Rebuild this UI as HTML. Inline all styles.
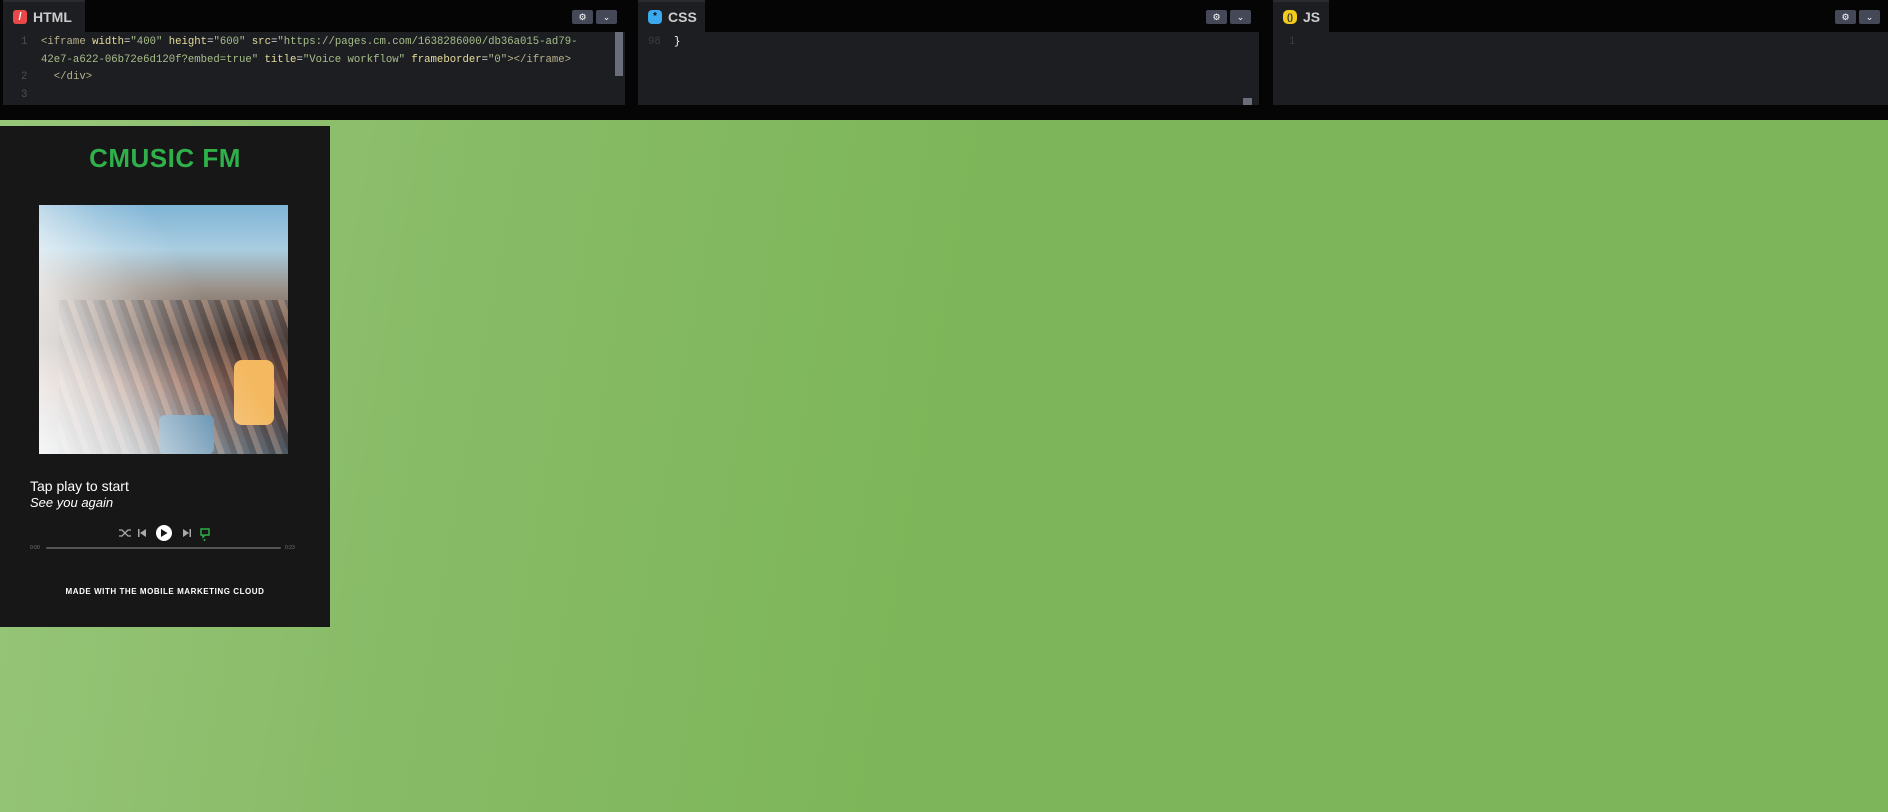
<!DOCTYPE html>
<html><head><meta charset="utf-8"><style>
*{margin:0;padding:0;box-sizing:border-box}
body{width:1888px;height:812px;overflow:hidden;background:linear-gradient(100deg,#98c67b 0%,#88bb66 25%,#7db65a 50%,#7db65a 100%);font-family:"Liberation Sans",sans-serif;position:relative}
.top{position:absolute;left:0;top:0;width:1888px;height:120px;background:#050505}
.panel{position:absolute;top:0;height:105px;background:#1d1e22}
.tabbar{position:absolute;left:0;top:0;right:0;height:32px;background:#050505}
.tab{position:absolute;left:0;top:0;height:32px;background:#1d1e22;border-top:2px solid #2a2b30;color:#ccc;font-size:14px;font-weight:bold;display:flex;align-items:center;padding-left:10px}
.ico{width:14px;height:14px;border-radius:3px;margin-right:6px;display:inline-block}
.btns{position:absolute;top:10px;right:8px;display:flex;gap:3px}
.btns span{width:21px;height:14px;background:#444857;border-radius:2px;color:#fff;font-size:9px;text-align:center;line-height:14px}
.code{position:absolute;left:0;top:32px;font-family:"Liberation Mono",monospace;font-size:10.65px;line-height:17.6px;padding-top:2px}
.ln{position:absolute;left:18px;color:#4c4e56;width:14px}
.cl{position:absolute;left:38px;white-space:pre}
.t{color:#b7b38d}.a{color:#e8dd9c}.v{color:#a8bf8a}.p{color:#ddd}
.player{position:absolute;left:0;top:126px;width:330px;height:501px;background:#171717}
</style></head><body>
<div class="top"></div>
<div class="panel" style="left:3px;width:622px">
 <div class="tabbar"></div>
 <div class="tab" style="width:82px"><span class="ico" style="background:#e84848;color:#fff;font-size:11px;text-align:center;line-height:14px">/</span>HTML</div>
 <div class="btns"><span>⚙</span><span>⌄</span></div>
 <div class="code" style="width:100%;height:73px">
  <div class="ln" style="top:2px">1</div>
  <div class="cl" style="top:2px"><span class="t">&lt;iframe</span> <span class="a">width</span><span class="p">=</span><span class="v">"400"</span> <span class="a">height</span><span class="p">=</span><span class="v">"600"</span> <span class="a">src</span><span class="p">=</span><span class="v">"https://pages.cm.com/1638286000/db36a015-ad79-</span></div>
  <div class="cl" style="top:19.6px"><span class="v">42e7-a622-06b72e6d120f?embed=true"</span> <span class="a">title</span><span class="p">=</span><span class="v">"Voice workflow"</span> <span class="a">frameborder</span><span class="p">=</span><span class="v">"0"</span><span class="t">&gt;&lt;/iframe&gt;</span></div>
  <div class="ln" style="top:37.2px">2</div>
  <div class="cl" style="top:37.2px">  <span class="t">&lt;/div&gt;</span></div>
  <div class="ln" style="top:54.8px">3</div>
 </div>
 <div style="position:absolute;right:2px;top:32px;width:8px;height:44px;background:#6a6d7a"></div>
</div>
<div class="panel" style="left:638px;width:621px">
 <div class="tabbar"></div>
 <div class="tab" style="width:67px"><span class="ico" style="background:#3aa9ee;border-radius:4px;color:#111;font-size:10px;text-align:center;line-height:14px">*</span>CSS</div>
 <div class="btns"><span>⚙</span><span>⌄</span></div>
 <div class="code" style="width:100%"><div class="ln" style="top:2px;left:10px;color:#3a3c44">98</div><div class="cl" style="top:2px;left:36px;color:#fff">}</div></div>
 <div style="position:absolute;right:7px;bottom:0;width:9px;height:7px;background:#6a6d7a"></div>
</div>
<div class="panel" style="left:1273px;width:615px">
 <div class="tabbar"></div>
 <div class="tab" style="width:56px"><span class="ico" style="background:#f2cb1d;border-radius:5px;color:#333;font-size:9px;text-align:center;line-height:14px">()</span>JS</div>
 <div class="btns"><span>⚙</span><span>⌄</span></div>
 <div class="code"><div class="ln" style="top:2px;left:16px;color:#3a3c44">1</div></div>
</div>

<div class="player">
 <div style="position:absolute;left:0;width:330px;top:17px;text-align:center;color:#2fb04a;font-size:26px;font-weight:bold;letter-spacing:0.5px;font-family:'Liberation Sans',sans-serif">CMUSIC FM</div>
 <div style="position:absolute;left:39px;top:79px;width:249px;height:249px;overflow:hidden;background:linear-gradient(180deg,#7fb4d6 0%,#a9cde0 18%,#9a8f86 34%,#5b4a42 55%,#8a5a48 72%,#4d5f6c 100%)">
  <div style="position:absolute;left:20px;top:95px;width:229px;height:154px;background:repeating-linear-gradient(70deg,rgba(40,30,30,.4) 0 6px,rgba(200,150,120,.3) 6px 12px,rgba(60,60,70,.3) 12px 18px)"></div>
  <div style="position:absolute;left:195px;top:155px;width:40px;height:65px;background:#f4b860;border-radius:8px"></div>
  <div style="position:absolute;left:120px;top:210px;width:55px;height:39px;background:#4b7fa3;border-radius:6px"></div>
  <div style="position:absolute;inset:0;background:linear-gradient(60deg,rgba(255,255,255,.95) 0%,rgba(255,255,255,.75) 25%,rgba(255,255,255,.2) 50%,rgba(255,255,255,0) 65%)"></div>
 </div>
 <div style="position:absolute;left:30px;top:352px;color:#fff;font-size:14px">Tap play to start</div>
 <div style="position:absolute;left:30px;top:369px;color:#fff;font-size:13px;font-style:italic">See you again</div>
 <svg style="position:absolute;left:0;top:396px" width="330" height="30" viewBox="0 0 330 30">
  <g stroke="#aaa" stroke-width="1.3" fill="none"><path d="M119 8l3 0 6 6 3 0M119 14l3 0 6-6 3 0"/></g>
  <path d="M138 7h1.5v8H138zM146 7v8l-6-4z" fill="#aaa"/>
  <circle cx="164" cy="11" r="8" fill="#fff"/><path d="M161 7v8l6.5-4z" fill="#171717"/>
  <path d="M183 7v8l6-4zM189.5 7H191v8h-1.5z" fill="#aaa"/>
  <path d="M201 7h8v6h-4l-2 2v-2h-2z" stroke="#2fb04a" stroke-width="1.4" fill="none"/><circle cx="204.5" cy="18" r="1" fill="#2fb04a"/>
 </svg>
 <div style="position:absolute;left:30px;top:419px;color:#777;font-size:5px">0:00</div>
 <div style="position:absolute;left:46px;top:421px;width:235px;height:2px;background:#555;border-radius:1px"></div>
 <div style="position:absolute;left:285px;top:419px;color:#777;font-size:5px">0:23</div>
 <div style="position:absolute;left:0;width:330px;top:461px;text-align:center;color:#fff;font-size:8px;font-weight:bold;letter-spacing:.55px">MADE WITH THE MOBILE MARKETING CLOUD</div>
</div>
</body></html>
